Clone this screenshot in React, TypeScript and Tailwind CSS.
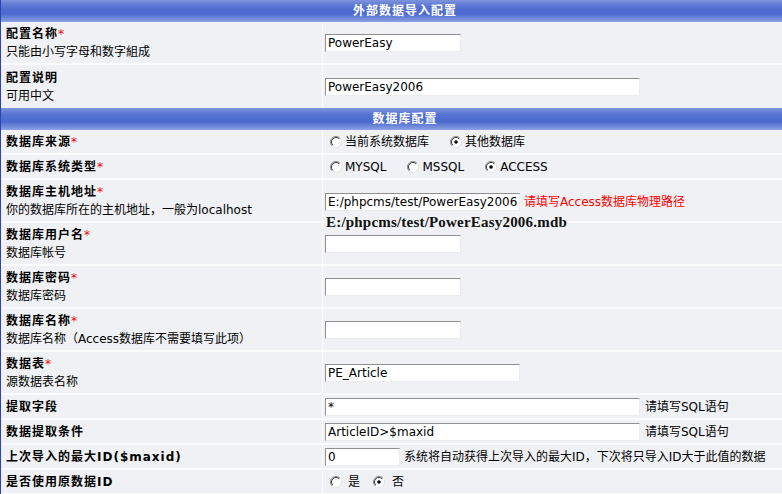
import React from "react";

function Radio({ checked }: { checked?: boolean }) {
  return (
    <svg width="12" height="12" viewBox="0 0 12 12" className="shrink-0">
      <circle cx="6" cy="6" r="5.5" fill="#ffffff" stroke="#e2e3e6" />
      <path d="M2.1 9.9 A5.5 5.5 0 0 1 9.9 2.1" fill="none" stroke="#8a8a8a" strokeWidth="1" />
      <path d="M2.8 9.2 A4.5 4.5 0 0 1 9.2 2.8" fill="none" stroke="#3c3c3c" strokeWidth="1" />
      {checked && <circle cx="6" cy="6" r="1.8" fill="#000000" />}
    </svg>
  );
}

function Option({ label, checked }: { label: string; checked?: boolean }) {
  return (
    <span className="ml-[5px] flex items-center gap-[3px]">
      <Radio checked={checked} />
      <span>{label}</span>
    </span>
  );
}

function Header({ title }: { title: string }) {
  return (
    <div className="flex h-[22px] items-center justify-center bg-[linear-gradient(180deg,#7d94dd_0%,#5673d3_30%,#4b69cf_62%,#8ca2e2_100%)] text-[12px] font-bold tracking-[1px] text-white">
      {title}
    </div>
  );
}

function Row({
  title,
  required,
  sub,
  tall,
  children,
}: {
  title: string;
  required?: boolean;
  sub?: string;
  tall?: boolean;
  children?: React.ReactNode;
}) {
  return (
    <div
      className={`grid grid-cols-[322px_1fr] border-b-2 border-[#fbfbfc] ${tall ? "h-[43px]" : "h-[25px]"}`}
    >
      <div className="flex flex-col justify-center border-r border-[#fbfbfc] pl-[5px] leading-[18px]">
        <div className="font-bold tracking-[1px]">
          {title}
          {required && <span className="font-normal text-[#ff0000]">*</span>}
        </div>
        {sub && <div>{sub}</div>}
      </div>
      <div className="relative flex items-center pl-[2px]">{children}</div>
    </div>
  );
}

function Field({ w, value }: { w: string; value?: string }) {
  return (
    <input
      readOnly
      value={value ?? ""}
      className={`${w} h-[18px] shrink-0 border border-b-[#ececec] border-l-[#8f8f8f] border-r-[#ececec] border-t-[#8f8f8f] bg-white px-[2px] font-['DejaVu_Sans','Noto_Sans_CJK_SC',sans-serif] text-[12px] leading-[16px] text-black outline-none`}
    />
  );
}

export default function App() {
  return (
    <div className="h-[494px] w-[782px] overflow-hidden bg-[#f0f1f4]">
      <div className="w-[809px] border-l border-[#2c44b0] bg-[#f0f1f4] font-['DejaVu_Sans','Noto_Sans_CJK_SC',sans-serif] text-[12px] text-black">
        <Header title="外部数据导入配置" />
        <Row title="配置名称" required sub="只能由小写字母和数字組成" tall>
          <Field w="w-[136px]" value="PowerEasy" />
        </Row>
        <div className="grid h-[43px] grid-cols-[322px_1fr]">
          <div className="flex flex-col justify-center border-r border-[#fbfbfc] pl-[5px] leading-[18px]">
            <div className="font-bold tracking-[1px]">配置说明</div>
            <div>可用中文</div>
          </div>
          <div className="flex items-center pl-[2px]">
            <Field w="w-[315px]" value="PowerEasy2006" />
          </div>
        </div>
        <Header title="数据库配置" />
        <Row title="数据库来源" required>
          <div className="flex items-center gap-[16px]">
            <Option label="当前系统数据库" />
            <Option label="其他数据库" checked />
          </div>
        </Row>
        <Row title="数据库系统类型" required>
          <div className="flex items-center gap-[16px]">
            <Option label="MYSQL" />
            <Option label="MSSQL" />
            <Option label="ACCESS" checked />
          </div>
        </Row>
        <Row title="数据库主机地址" required sub="你的数据库所在的主机地址，一般为localhost" tall>
          <div className="flex items-center gap-[4px] pt-[2px]">
            <Field w="w-[195px]" value="E:/phpcms/test/PowerEasy2006.mdb" />
            <span className="text-[#ff0000]">请填写Access数据库物理路径</span>
          </div>
          <span className="absolute left-[3px] top-[34px] z-10 bg-[#f0f1f4] font-['Liberation_Serif',serif] text-[15px] font-bold leading-[16px] tracking-[0.2px] text-[#111]">
            E:/phpcms/test/PowerEasy2006.mdb
          </span>
        </Row>
        <Row title="数据库用户名" required sub="数据库帐号" tall>
          <Field w="w-[136px]" />
        </Row>
        <Row title="数据库密码" required sub="数据库密码" tall>
          <Field w="w-[136px]" />
        </Row>
        <Row title="数据库名称" required sub="数据库名称（Access数据库不需要填写此项）" tall>
          <Field w="w-[136px]" />
        </Row>
        <Row title="数据表" required sub="源数据表名称" tall>
          <Field w="w-[195px]" value="PE_Article" />
        </Row>
        <Row title="提取字段">
          <div className="flex items-center gap-[5px]">
            <Field w="w-[315px]" value="*" />
            <span>请填写SQL语句</span>
          </div>
        </Row>
        <Row title="数据提取条件">
          <div className="flex items-center gap-[5px]">
            <Field w="w-[315px]" value="ArticleID>$maxid" />
            <span>请填写SQL语句</span>
          </div>
        </Row>
        <Row title="上次导入的最大ID($maxid)">
          <div className="flex items-center gap-[4px]">
            <Field w="w-[75px]" value="0" />
            <span>系统将自动获得上次导入的最大ID，下次将只导入ID大于此值的数据</span>
          </div>
        </Row>
        <Row title="是否使用原数据ID">
          <div className="flex items-center">
            <span className="ml-[5px] flex items-center gap-[6px]">
              <Radio />
              <span>是</span>
            </span>
            <span className="ml-[13px] flex items-center gap-[7px]">
              <Radio checked />
              <span>否</span>
            </span>
          </div>
        </Row>
      </div>
    </div>
  );
}
